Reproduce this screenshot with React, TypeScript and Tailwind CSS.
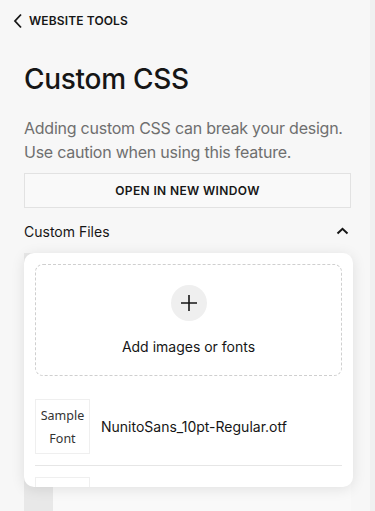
import React from "react";

export default function App() {
  return (
    <div className="relative w-[375px] h-[511px] overflow-hidden bg-[#f7f7f7] text-[#161616]" style={{ fontFamily: "Inter, 'Liberation Sans', sans-serif" }}>
      <div className="absolute right-0 top-0 h-full w-[5px] bg-[#f0f0f0]" />
      <div className="flex items-center gap-[6px] pl-[13px] pt-[13px] h-[28px]">
        <svg width="10" height="16" viewBox="0 0 10 16" fill="none" stroke="#161616" strokeWidth="1.8">
          <path d="M8 1.5 L2 8 L8 14.5" />
        </svg>
        <span className="text-[12px] font-semibold tracking-[0.01em] uppercase">Website Tools</span>
      </div>
      <div className="px-[24px]">
        <h1 className="mt-[33px] text-[28px] font-medium leading-[36px] tracking-[-0.01em]">Custom CSS</h1>
        <p className="mt-[19px] text-[16px] leading-[24px] tracking-[-0.015em] text-[#6f6f6f]">
          Adding custom CSS can break your design. Use caution when using this feature.
        </p>
        <button className="mt-[9px] w-full h-[35px] border border-[#e2e2e2] bg-[#f9f9f9] text-[12px] font-semibold tracking-[0.03em] uppercase">
          Open in new window
        </button>
        <div className="mt-[12px] flex items-center justify-between h-[22px] pr-[4px]">
          <span className="text-[14px]">Custom Files</span>
          <svg width="13" height="8" viewBox="0 0 13 8" fill="none" stroke="#161616" strokeWidth="2" className="mr-[-2px]">
            <path d="M1.5 6.5 L6.5 1.8 L11.5 6.5" />
          </svg>
        </div>
        <div className="mt-[11px] flex h-[300px]">
          <div className="w-[29px] bg-[#e8e8e8]" />
          <div className="flex-1 bg-[#f9f9f9]" />
        </div>
      </div>

      <div className="absolute left-[24px] top-[253px] w-[329px] h-[234px] bg-white rounded-[10px] shadow-[0_2px_14px_rgba(0,0,0,0.10)] overflow-hidden px-[11px] pt-[11px]">
        <div className="h-[112px] rounded-[8px] border border-dashed border-[#cfcfcf] flex flex-col items-center">
          <div className="mt-[20px] w-[36px] h-[36px] rounded-full bg-[#efefef] flex items-center justify-center">
            <svg width="18" height="18" viewBox="0 0 18 18" stroke="#161616" strokeWidth="1.6">
              <path d="M9 1 V17 M1 9 H17" />
            </svg>
          </div>
          <span className="mt-[15px] text-[14px]">Add images or fonts</span>
        </div>
        <div className="mt-[23px] flex items-center gap-[11px]">
          <div className="w-[55px] h-[55px] border border-[#efefef] flex flex-col items-center justify-center text-[12.5px] leading-[23px] text-[#333]" style={{ fontFamily: "'Noto Sans', 'Open Sans', sans-serif" }}>
            <span>Sample</span>
            <span>Font</span>
          </div>
          <span className="text-[14px]">NunitoSans_10pt-Regular.otf</span>
        </div>
        <div className="mt-[11px] h-px bg-[#e6e6e6]" />
        <div className="mt-[11px] w-[55px] h-[55px] border border-[#efefef]" />
      </div>
    </div>
  );
}
